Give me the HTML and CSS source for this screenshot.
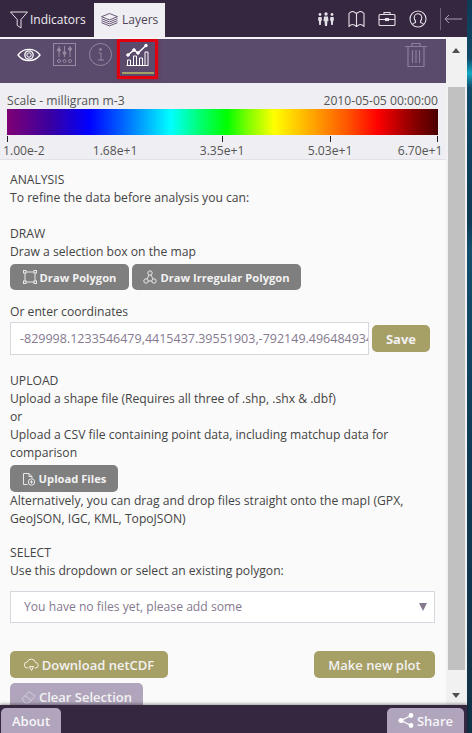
FILE: index.html
```html
<!DOCTYPE html>
<html lang="en">
<head>
    <meta charset="UTF-8">
    <title>Layers</title>
    <link rel="stylesheet" href="styles.css">
</head>
<body>
    <div class="panel">
        <!-- Top tabs -->
        <div class="top-bar">
            <div class="tab">
                <svg width="18" height="18" viewBox="0 0 18 18" fill="none" stroke="#e4e0e8" stroke-width="1"><path d="M.5 1h17l-6.500 7.500v8.500l-3.800-2.600v-5.900z"/></svg>
                Indicators
            </div>
            <div class="tab tab-active">
                <svg width="17" height="15" viewBox="0 0 17 15" fill="none" stroke="#5a4a6c" stroke-width="0.9"><path d="M8.500 .5l8 3.200-8 3.200-8-3.200z"/><path d="M.5 5.700l8 3.200 8-3.200M.5 7.700l8 3.200 8-3.200M.5 9.700l8 3.200 8-3.200"/></svg>
                Layers
            </div>
            <div class="top-icons">
                <svg width="18" height="14" viewBox="0 0 18 14" fill="#e4e0e8"><circle cx="9" cy="2" r="1.700"/><path d="M7 4.500h4l.5 4.500h-1l-.5 5h-2l-.5-5h-1z"/><circle cx="3" cy="2.500" r="1.400"/><path d="M1.400 5h3.200l.4 3.500h-.8l-.4 4.500h-1.600l-.4-4.500h-.8z"/><circle cx="15" cy="2.500" r="1.400"/><path d="M13.400 5h3.200l.4 3.500h-.8l-.4 4.500h-1.600l-.4-4.500h-.8z"/></svg>
                <svg width="17" height="16" viewBox="0 0 17 16" fill="none" stroke="#e4e0e8" stroke-width="1.100"><path d="M1 2.500c1.300-1.500 2.500-2 3.500-2s3 1.200 4 2c1-.8 3-2 4-2s2.200.5 3.500 2v13c-1.300-1.500-2.500-2-3.500-2s-3 1.200-4 2c-1-.8-3-2-4-2s-2.200.5-3.500 2z"/><path d="M8.500 2.500v13"/></svg>
                <svg width="18" height="15" viewBox="0 0 18 15" fill="none" stroke="#e4e0e8" stroke-width="1.100"><rect x="1" y="3.500" width="16" height="11" rx="1"/><path d="M6 3.500v-2h6v2M1 8.500h16"/><rect x="7.500" y="7.500" width="3" height="2" fill="#e4e0e8"/></svg>
                <svg width="18" height="18" viewBox="0 0 18 18" fill="none" stroke="#e4e0e8" stroke-width="1.100"><circle cx="9" cy="9" r="8"/><path d="M3.500 14.500s0-1 3-2v-1.500c-1-1-1.300-2-1.300-3.500a3.800 3.800 0 0 1 7.600 0c0 1.500-.3 2.500-1.300 3.500v1.500c3 1 3 2 3 2"/></svg>
                <div class="collapse">
                    <svg width="18" height="10" viewBox="0 0 18 10" fill="none" stroke="#a89eb3" stroke-width="1"><path d="M18 5H1M5 1L1 5l4 4"/></svg>
                </div>
            </div>
        </div>

        <div class="middle">
            <div class="main">
                <!-- Layer tools -->
                <div class="toolbar">
                    <svg class="tool-eye" width="24" height="14" viewBox="0 0 24 14" fill="none" stroke="#fff" stroke-width="1.300"><path d="M1 7c5.500-7.500 16.500-7.500 22 0-5.500 7.500-16.500 7.500-22 0z"/><circle cx="12" cy="7" r="4.200"/><circle cx="12" cy="7" r="2.200" stroke-width="1"/></svg>
                    <svg class="tool-sliders" width="23" height="23" viewBox="0 0 23 23" fill="none" stroke="#95899f" stroke-width="1"><rect x="0.500" y="0.500" width="22" height="22"/><path d="M6 3v11M11.500 3v11M17 3v11"/><circle cx="6" cy="7" r="1.500" fill="#95899f"/><circle cx="11.500" cy="10" r="1.500" fill="#95899f"/><circle cx="17" cy="6" r="1.500" fill="#95899f"/><circle cx="6" cy="18" r="1.500"/><circle cx="11.500" cy="18" r="1.500"/><circle cx="17" cy="18" r="1.500"/></svg>
                    <svg class="tool-info" width="23" height="23" viewBox="0 0 23 23" fill="none" stroke="#95899f" stroke-width="1"><circle cx="11.500" cy="11.500" r="11"/><path d="M9.500 10h2.500v7M9 17h6"/><circle cx="11.500" cy="6.500" r="1" fill="#95899f"/></svg>
                    <div class="tool-plot">
                        <svg width="23" height="23" viewBox="0 0 23 23" fill="none" stroke="#fff" stroke-width="1"><path d="M.5 22.500h22"/><path d="M1.500 22v-5h3v5M7.500 22v-9h3v9M13.500 22v-7h3v7M19 22v-13h3v13"/><path d="M2 12l6-5 4 3 8-7.500" stroke-width="1.400"/><circle cx="2" cy="12" r="1.300" fill="#fff"/><circle cx="8" cy="7" r="1.300" fill="#fff"/><circle cx="12" cy="10" r="1.300" fill="#fff"/><circle cx="20" cy="2.500" r="1.300" fill="#fff"/></svg>
                        <div class="tool-underline"></div>
                    </div>
                    <svg class="tool-trash" width="22" height="24" viewBox="0 0 22 24" fill="none" stroke="#8b7e98" stroke-width="1.200"><path d="M0 3.500h22M7 3.500v-3h8v3M3 3.500v20h16v-20M7.500 7v13M11 7v13M14.500 7v13"/></svg>
                </div>

                <!-- Colour scale -->
                <div class="scale">
                    <div class="scale-head">
                        <span>Scale - milligram m-3</span>
                        <span>2010-05-05 00:00:00</span>
                    </div>
                    <div class="scale-bar"></div>
                    <div class="scale-ticks">
                        <i></i><i></i><i></i><i></i>
                    </div>
                    <div class="scale-labels">
                        <span>1.00e-2</span>
                        <span>1.68e+1</span>
                        <span>3.35e+1</span>
                        <span>5.03e+1</span>
                        <span>6.70e+1</span>
                    </div>
                </div>

                <div class="content">
                    <p class="heading">ANALYSIS</p>
                    <p>To refine the data before analysis you can:</p>

                    <p class="heading section-draw">DRAW</p>
                    <p>Draw a selection box on the map</p>
                    <div class="btn-row">
                        <button class="btn btn-grey">
                            <svg width="14" height="14" viewBox="0 0 14 14" fill="none" stroke="#e8e8e8" stroke-width="1"><rect x="2" y="2" width="10" height="10"/><rect x="0.500" y="0.500" width="2.500" height="2.500" fill="#7f7f7f"/><rect x="11" y="0.500" width="2.500" height="2.500" fill="#7f7f7f"/><rect x="0.500" y="11" width="2.500" height="2.500" fill="#7f7f7f"/><rect x="11" y="11" width="2.500" height="2.500" fill="#7f7f7f"/></svg>
                            Draw Polygon
                        </button>
                        <button class="btn btn-grey">
                            <svg width="14" height="14" viewBox="0 0 14 14" fill="none" stroke="#e8e8e8" stroke-width="1"><circle cx="7" cy="3" r="2.200"/><circle cx="3" cy="11" r="2.200"/><circle cx="11" cy="11" r="2.200"/><path d="M6 5l-2 4M8 5l2 4M5.200 11h3.600"/></svg>
                            Draw Irregular Polygon
                        </button>
                    </div>

                    <p class="coords-label">Or enter coordinates</p>
                    <div class="coords-row">
                        <input class="coords" type="text" value="-829998.1233546479,4415437.39551903,-792149.49648493449,4451234.1234">
                        <button class="btn btn-olive btn-save">Save</button>
                    </div>

                    <p class="heading section-upload">UPLOAD</p>
                    <p>Upload a shape file (Requires all three of .shp, .shx &amp; .dbf)</p>
                    <p>or</p>
                    <p>Upload a CSV file containing point data, including matchup data for comparison</p>
                    <button class="btn btn-grey btn-upload">
                        <svg width="14" height="14" viewBox="0 0 14 14" fill="none" stroke="#e8e8e8" stroke-width="1"><path d="M5.500 12.500H1.500v-11H7l3 3v2"/><path d="M7 1.500v3h3"/><circle cx="9.500" cy="10" r="3.200"/><path d="M9.500 8.300v3.400M7.800 10h3.400"/></svg>
                        Upload Files
                    </button>
                    <p>Alternatively, you can drag and drop files straight onto the mapI (GPX, GeoJSON, IGC, KML, TopoJSON)</p>

                    <p class="heading section-select">SELECT</p>
                    <p>Use this dropdown or select an existing polygon:</p>
                    <div class="select">
                        <span>You have no files yet, please add some</span>
                        <span class="select-arrow"></span>
                    </div>

                    <div class="actions">
                        <button class="btn btn-olive btn-big btn-download">
                            <svg width="15" height="14" viewBox="0 0 15 14" fill="none" stroke="#f2f0e4" stroke-width="1"><path d="M4.500 10H3.500a3 3 0 0 1-.3-6 4.300 4.300 0 0 1 8.300.6 2.700 2.700 0 0 1 0 5.400h-1"/><path d="M5.500 8.500l2 4 2-4z"/></svg>
                            Download netCDF
                        </button>
                        <button class="btn btn-olive btn-big btn-plot">Make new plot</button>
                    </div>
                    <button class="btn btn-lilac btn-big btn-clear">
                        <svg width="15" height="14" viewBox="0 0 15 14" fill="none" stroke="#d3ccdb" stroke-width="1"><path d="M1 9l7-7.500 6 4.500-6 7H4z"/><path d="M4 5.500l6 4.500"/></svg>
                        Clear Selection
                    </button>
                </div>
            </div>

            <div class="scrollbar">
                <div class="scroll-up"></div>
                <div class="scroll-track"><div class="scroll-thumb"></div></div>
                <div class="scroll-down"></div>
            </div>
        </div>

        <div class="bottom-bar">
            <button class="foot-btn">About</button>
            <button class="foot-btn">
                <svg width="16" height="15" viewBox="0 0 16 15" fill="#fff" stroke="#fff" stroke-width="1.200"><path d="M3 7.500L13 2.500M3 7.500l10 5" fill="none"/><circle cx="3" cy="7.500" r="2"/><circle cx="13" cy="2.500" r="1.800"/><circle cx="13" cy="12.500" r="1.800"/></svg>
                Share
            </button>
        </div>
    </div>
</body>
</html>
```

FILE: styles.css
```css
html, body {
    margin: 0;
    height: 100%;
}

body {
    font-family: "Open Sans", sans-serif;
    font-size: 12.15px;
    line-height: 18px;
    color: #4a4a4a;
    background: linear-gradient(to bottom, #0e3a56 0%, #0f4a68 8%, #12a8c4 10%, #0f4a68 12%, #0e3a56 30%, #12506e 34%, #0f3c58 60%, #123247 100%);
    overflow: hidden;
}

.panel {
    width: 467px;
    height: 733px;
    display: flex;
    flex-direction: column;
    background: #f1f1f1;
}

/* Top tabs */
.top-bar {
    height: 37px;
    flex: none;
    display: flex;
    align-items: flex-end;
    background: #35273f;
    border-bottom: 2px solid #f4f3f6;
}

.tab {
    width: 94px;
    height: 34px;
    box-sizing: border-box;
    display: flex;
    align-items: center;
    gap: 2px;
    padding-left: 10px;
    color: #efedf1;
    font-size: 12px;
}

.tab-active {
    width: 71px;
    gap: 4px;
    padding-left: 7px;
    color: #4d4458;
    background: #efeef2;
}

.top-icons {
    margin-left: auto;
    height: 37px;
    display: flex;
    align-items: center;
    gap: 13px;
    padding-right: 5px;
}

.collapse {
    height: 22px;
    display: flex;
    align-items: center;
    padding-left: 3px;
    border-left: 1px solid #6c5f78;
}

.middle {
    flex: 1;
    display: flex;
    min-height: 0;
}

.main {
    width: 446px;
    flex: none;
    overflow: hidden;
    background: #fafafa;
}

/* Layer tools */
.toolbar {
    height: 44px;
    display: flex;
    align-items: flex-start;
    background: #5a4a6c;
}

.tool-eye {
    margin: 9px 0 0 17px;
}

.tool-sliders {
    margin: 4px 0 0 12px;
}

.tool-info {
    margin: 4px 0 0 13px;
}

.tool-plot {
    width: 41px;
    height: 40px;
    margin-left: 5px;
    box-sizing: border-box;
    display: flex;
    flex-direction: column;
    align-items: center;
    padding-top: 1px;
    border: 3px solid #e0000f;
    box-shadow: 0 0 3px rgba(224, 0, 15, 0.5);
}

.tool-underline {
    width: 32px;
    height: 2px;
    margin-top: 6px;
    background: #a69f66;
}

.tool-trash {
    margin: 4px 19px 0 auto;
}

/* Colour scale */
.scale {
    height: 77px;
    box-sizing: border-box;
    padding: 9px 8px 0 7px;
    background: #efeef2;
    border-bottom: 1px solid #e2e1e5;
    color: #555;
}

.scale-head {
    display: flex;
    justify-content: space-between;
    height: 17px;
    line-height: 17px;
}

.scale-bar {
    height: 26px;
    width: 431px;
    background: linear-gradient(to right, #7f0074 0%, #3a00a0 10%, #0000ff 19%, #0058ff 26%, #00ffff 38%, #00ff80 44%, #00ff00 51%, #80ff00 56%, #ffff00 62%, #ffa500 71%, #ff5500 79%, #ff0000 86%, #8f0000 94%, #4a0000 100%);
}

.scale-ticks {
    width: 431px;
    height: 6px;
    margin-top: 1px;
    display: flex;
}

.scale-ticks i {
    width: 1px;
    height: 6px;
    background: #222;
}

.scale-ticks i:nth-child(2) {
    margin-left: 214px;
}

.scale-ticks i:nth-child(3) {
    margin-left: 107px;
}

.scale-ticks i:nth-child(4) {
    margin-left: 106px;
}

.scale-labels {
    display: flex;
    margin-left: -4px;
    height: 17px;
    line-height: 17px;
    white-space: nowrap;
}

.scale-labels span {
    width: 42px;
}

.scale-labels span:nth-child(2) {
    margin-left: 48px;
}

.scale-labels span:nth-child(3) {
    margin-left: 65px;
}

.scale-labels span:nth-child(4) {
    margin-left: 66px;
}

.scale-labels span:nth-child(5) {
    margin-left: 48px;
}

/* Main content */
.content {
    padding: 11px 11px 0 10px;
    color: #444;
}

.content p {
    margin: 0;
}

.content .section-draw {
    margin-top: 18px;
}

.content .section-upload {
    margin-top: 17px;
}

.content .section-select {
    margin-top: 16px;
}

.content .coords-label {
    margin-top: 13px;
}

.btn {
    font-family: inherit;
    font-size: 11.200px;
    font-weight: 700;
    color: #f2f2f2;
    border: 0;
    border-radius: 5px;
    padding: 0;
    display: inline-flex;
    align-items: center;
    justify-content: center;
    gap: 3px;
}

.btn-grey {
    height: 26px;
    background: #7f7f7f;
}

.btn-olive {
    background: #a69f66;
}

.btn-lilac {
    background: #b0a5bc;
}

.btn-row {
    display: flex;
    gap: 3px;
    margin-top: 3px;
}

.btn-row .btn:first-child {
    width: 119px;
}

.btn-row .btn:last-child {
    width: 169px;
}

.coords-row {
    display: flex;
    gap: 3px;
    margin-top: 1px;
}

.coords {
    width: 359px;
    height: 33px;
    box-sizing: border-box;
    border: 1px solid #d8d5de;
    padding: 0 0 0 9px;
    background: #fff;
    font-family: inherit;
    font-size: 12.500px;
    color: #85798f;
}

.btn-save {
    width: 58px;
    height: 27px;
    margin-top: 3px;
    font-size: 13px;
}

.btn-upload {
    width: 108px;
    height: 27px;
    margin-top: 3px;
    display: flex;
}

.select {
    height: 32px;
    margin-top: 11px;
    box-sizing: border-box;
    display: flex;
    align-items: center;
    justify-content: space-between;
    padding: 0 7px 0 13px;
    background: #fff;
    border: 1px solid #d8d5de;
    color: #85798f;
}

.select-arrow {
    width: 0;
    height: 0;
    border-left: 4px solid transparent;
    border-right: 4px solid transparent;
    border-top: 8px solid #85798f;
}

.actions {
    display: flex;
    justify-content: space-between;
    margin-top: 28px;
    margin-bottom: 5px;
}

.btn-big {
    height: 27px;
    font-size: 13px;
    font-weight: 600;
}

.btn-download {
    width: 158px;
}

.btn-plot {
    width: 121px;
}

.btn-clear {
    width: 133px;
}

/* Scrollbar */
.scrollbar {
    width: 17px;
    margin-left: 2px;
    display: flex;
    flex-direction: column;
    background: #f1f1f1;
}

.scroll-up,
.scroll-down {
    height: 17px;
    flex: none;
    position: relative;
}

.scroll-up::after,
.scroll-down::after {
    content: "";
    position: absolute;
    left: 4px;
    width: 0;
    height: 0;
    border-left: 4.500px solid transparent;
    border-right: 4.500px solid transparent;
}

.scroll-up::after {
    top: 9px;
    border-bottom: 5px solid #505050;
}

.scroll-down::after {
    top: 5px;
    border-top: 5px solid #505050;
}

.scroll-track {
    flex: 1;
}

.scroll-thumb {
    height: 583px;
    margin-top: 31px;
    background: #c1c1c1;
}

/* Bottom bar */
.bottom-bar {
    height: 28px;
    flex: none;
    display: flex;
    justify-content: space-between;
    align-items: flex-end;
    padding: 0 3px 0 1px;
    background: #35273f;
    box-shadow: 0 -1px 3px rgba(0, 0, 0, 0.4);
    position: relative;
}

.foot-btn {
    height: 25px;
    padding: 0 11px;
    border: 0;
    border-radius: 5px 5px 0 0;
    background: #b0a5bc;
    color: #f7f6f8;
    font-family: inherit;
    font-size: 13px;
    font-weight: 600;
    display: inline-flex;
    align-items: center;
    gap: 3px;
}
```
